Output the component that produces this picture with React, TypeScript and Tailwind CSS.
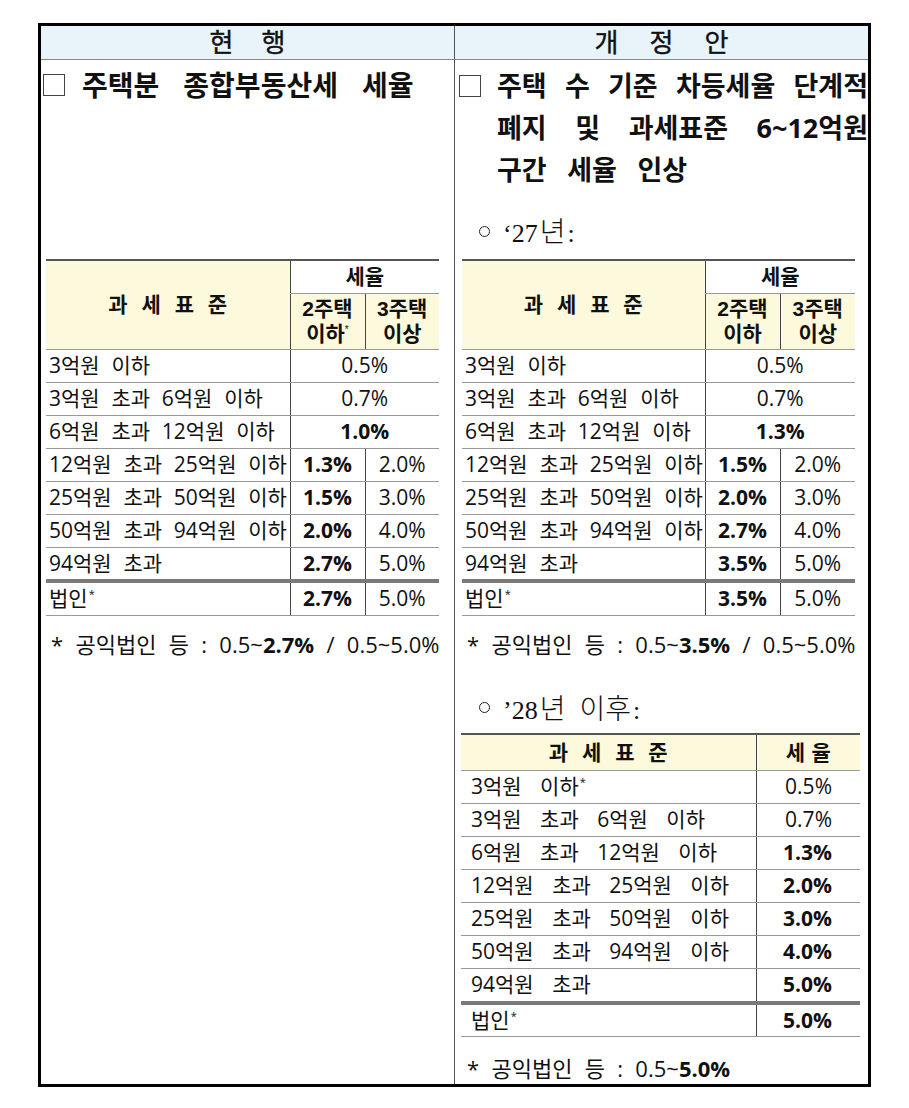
import React from "react";

type Row = { label: string; a: string; b?: string; boldA?: boolean; star?: boolean; dbl?: boolean };

const SANS = "font-['Open_Sans','Noto_Sans_CJK_KR',sans-serif]";

const Star = () => <span className="relative -top-[8px] text-[11px] ml-[1px]">*</span>;

const TwoLine = ({ a, b, star }: { a: string; b: string; star?: boolean }) => (
  <div className="flex flex-col items-center font-['Liberation_Sans','Noto_Sans_CJK_KR',sans-serif]">
    <span className="block h-[25px] leading-[25px]">{a}</span>
    <span className="block h-[25px] leading-[25px]">
      {b}
      {star && <span className="relative -top-[8px] text-[10px] font-normal">*</span>}
    </span>
  </div>
);

function RateTable({ rows, w1, w2, w3, star }: { rows: Row[]; w1: number; w2: number; w3: number; star?: boolean }) {
  return (
    <table className={`border-collapse table-fixed text-[#111] ${SANS}`} style={{ width: w1 + w2 + w3 }}>
      <colgroup>
        <col style={{ width: w1 }} />
        <col style={{ width: w2 }} />
        <col style={{ width: w3 }} />
      </colgroup>
      <thead>
        <tr className="h-[33px]">
          <th
            rowSpan={2}
            className="bg-[#fdf9dc] border-t-2 border-t-[#555] border-b border-b-[#999] text-[21px] font-bold [word-spacing:0.4em] text-center align-middle"
          >
            과 세 표 준
          </th>
          <th
            colSpan={2}
            className="bg-white border-t-2 border-t-[#555] border-b border-b-[#999] border-l border-l-[#444] text-[21px] font-bold text-center align-middle"
          >
            세율
          </th>
        </tr>
        <tr className="h-[56px]">
          <th className="bg-[#fdf9dc] border-b border-b-[#999] border-l border-l-[#444] text-[21px] font-bold text-center align-middle">
            <TwoLine a="2주택" b="이하" star={star} />
          </th>
          <th className="bg-[#fdf9dc] border-b border-b-[#999] border-l border-l-[#444] text-[21px] font-bold text-center align-middle">
            <TwoLine a="3주택" b="이상" />
          </th>
        </tr>
      </thead>
      <tbody>
        {rows.map((r, i) => (
          <tr key={i} className="h-[33px]">
            <td
              className={`pl-[3px] whitespace-nowrap text-[21px] [word-spacing:0.3em] align-middle ${
                r.dbl ? "border-b-[4px] border-b-[#7a7a7a]" : "border-b border-b-[#999]"
              }`}
            >
              {r.label}
              {r.star && <Star />}
            </td>
            {r.b === undefined ? (
              <td
                colSpan={2}
                className={`border-l border-l-[#444] text-center text-[21px] align-middle ${r.boldA ? "font-bold" : ""} ${
                  r.dbl ? "border-b-[4px] border-b-[#7a7a7a]" : "border-b border-b-[#999]"
                }`}
              >
                {r.a}
              </td>
            ) : (
              <>
                <td
                  className={`border-l border-l-[#444] text-center text-[21px] align-middle font-bold ${
                    r.dbl ? "border-b-[4px] border-b-[#7a7a7a]" : "border-b border-b-[#999]"
                  }`}
                >
                  {r.a}
                </td>
                <td
                  className={`border-l border-l-[#444] text-center text-[21px] align-middle ${
                    r.dbl ? "border-b-[4px] border-b-[#7a7a7a]" : "border-b border-b-[#999]"
                  }`}
                >
                  {r.b}
                </td>
              </>
            )}
          </tr>
        ))}
      </tbody>
    </table>
  );
}

const leftRows: Row[] = [
  { label: "3억원 이하", a: "0.5%" },
  { label: "3억원 초과 6억원 이하", a: "0.7%" },
  { label: "6억원 초과 12억원 이하", a: "1.0%", boldA: true },
  { label: "12억원 초과 25억원 이하", a: "1.3%", b: "2.0%" },
  { label: "25억원 초과 50억원 이하", a: "1.5%", b: "3.0%" },
  { label: "50억원 초과 94억원 이하", a: "2.0%", b: "4.0%" },
  { label: "94억원 초과", a: "2.7%", b: "5.0%", dbl: true },
  { label: "법인", a: "2.7%", b: "5.0%", star: true },
];

const rightRows: Row[] = [
  { label: "3억원 이하", a: "0.5%" },
  { label: "3억원 초과 6억원 이하", a: "0.7%" },
  { label: "6억원 초과 12억원 이하", a: "1.3%", boldA: true },
  { label: "12억원 초과 25억원 이하", a: "1.5%", b: "2.0%" },
  { label: "25억원 초과 50억원 이하", a: "2.0%", b: "3.0%" },
  { label: "50억원 초과 94억원 이하", a: "2.7%", b: "4.0%" },
  { label: "94억원 초과", a: "3.5%", b: "5.0%", dbl: true },
  { label: "법인", a: "3.5%", b: "5.0%", star: true },
];

const flatRows: { label: string; v: string; bold?: boolean; star?: boolean; dbl?: boolean }[] = [
  { label: "3억원 이하", v: "0.5%", star: true },
  { label: "3억원 초과 6억원 이하", v: "0.7%" },
  { label: "6억원 초과 12억원 이하", v: "1.3%", bold: true },
  { label: "12억원 초과 25억원 이하", v: "2.0%", bold: true },
  { label: "25억원 초과 50억원 이하", v: "3.0%", bold: true },
  { label: "50억원 초과 94억원 이하", v: "4.0%", bold: true },
  { label: "94억원 초과", v: "5.0%", bold: true, dbl: true },
  { label: "법인", v: "5.0%", bold: true, star: true },
];

function FlatTable() {
  return (
    <table className={`border-collapse table-fixed w-[399px] text-[#111] ${SANS}`}>
      <colgroup>
        <col className="w-[295px]" />
        <col className="w-[104px]" />
      </colgroup>
      <thead>
        <tr className="h-[37px]">
          <th className="bg-[#fdf9dc] border-t-2 border-t-[#555] border-b border-b-[#999] text-[21px] font-bold [word-spacing:0.4em] text-center align-middle">
            과 세 표 준
          </th>
          <th className="bg-[#fdf9dc] border-t-2 border-t-[#555] border-b border-b-[#999] border-l border-l-[#444] text-[21px] font-bold [word-spacing:0.05em] text-center align-middle">
            세 율
          </th>
        </tr>
      </thead>
      <tbody>
        {flatRows.map((r, i) => (
          <tr key={i} className="h-[33px]">
            <td
              className={`pl-[10px] whitespace-nowrap text-[21px] [word-spacing:0.62em] align-middle ${
                r.dbl ? "border-b-[4px] border-b-[#7a7a7a]" : "border-b border-b-[#999]"
              }`}
            >
              {r.label}
              {r.star && <Star />}
            </td>
            <td
              className={`border-l border-l-[#444] text-right pr-[28px] text-[21px] align-middle ${r.bold ? "font-bold" : ""} ${
                r.dbl ? "border-b-[4px] border-b-[#7a7a7a]" : "border-b border-b-[#999]"
              }`}
            >
              {r.v}
            </td>
          </tr>
        ))}
      </tbody>
    </table>
  );
}

const Box = () => <span className="inline-block w-[22px] h-[22px] border-[1.5px] border-[#444] shrink-0" />;

const Note = ({ children, mt }: { children: React.ReactNode; mt: string }) => (
  <div className={`${mt} ml-[8px] h-[30px] leading-[30px] text-[22px] [word-spacing:0.3em] whitespace-nowrap ${SANS}`}>
    {children}
  </div>
);

export default function App() {
  return (
    <div className="w-[909px] h-[1108px] bg-white pt-[23px] pl-[38px] text-[#111]">
      <div className="w-[833px] border-[3px] border-black">
        <div className="grid grid-cols-[414px_413px]">
          {/* headers */}
          <div className={`h-[34px] bg-[#e8f4fa] border-b border-b-[#888] border-r border-r-[#555] flex items-center justify-center gap-[28px] text-[26px] [-webkit-text-stroke:0.4px_#111] ${SANS}`}>
            <span>현</span>
            <span>행</span>
          </div>
          <div className={`h-[34px] bg-[#e8f4fa] border-b border-b-[#888] flex items-center justify-center gap-[31px] text-[26px] [-webkit-text-stroke:0.4px_#111] ${SANS}`}>
            <span>개</span>
            <span>정</span>
            <span>안</span>
          </div>

          {/* left body */}
          <div className="border-r border-r-[#555] pl-[2px] pt-[3px]">
            <div className={`flex items-center h-[44px] text-[28px] font-bold ${SANS}`}>
              <Box />
              <span className="ml-[17px] [word-spacing:0.6em]">주택분 종합부동산세 세율</span>
            </div>
            <div className="mt-[152px] ml-[3px]">
              <RateTable rows={leftRows} w1={244} w2={75} w3={74} star />
            </div>
            <Note mt="mt-[13px]">
              * 공익법인 등 : 0.5~<b>2.7%</b> / 0.5~5.0%
            </Note>
          </div>

          {/* right body */}
          <div className="pt-[5px] pl-[4px] pb-[1px]">
            <div className={`text-[27px] font-bold leading-[42px] ${SANS}`}>
              <div className="flex items-center">
                <Box />
                <div className="ml-[16px] flex-1 flex justify-between">
                  <span>주택</span>
                  <span>수</span>
                  <span>기준</span>
                  <span>차등세율</span>
                  <span>단계적</span>
                </div>
              </div>
              <div className="pl-[38px] flex justify-between">
                <span>폐지</span>
                <span>및</span>
                <span>과세표준</span>
                <span>6~12억원</span>
              </div>
              <div className="pl-[38px] [word-spacing:0.5em]">구간 세율 인상</div>
            </div>

            <div className="mt-[24px] h-[32px] flex items-center pl-[20px] text-[26px] font-['Liberation_Serif','Noto_Sans_CJK_KR',serif]">
              <span className="inline-block w-[11px] h-[11px] rounded-full border-[1.5px] border-[#222]" />
              <span className="ml-[13px]">
                ‘27<span className="inline-block text-[28px] px-[2px] font-['Noto_Sans_CJK_KR',sans-serif] font-light">년</span>:
              </span>
            </div>

            <div className="mt-[12px] ml-[3px]">
              <RateTable rows={rightRows} w1={243} w2={75} w3={75} />
            </div>
            <Note mt="mt-[13px]">
              * 공익법인 등 : 0.5~<b>3.5%</b> / 0.5~5.0%
            </Note>

            <div className="mt-[33px] h-[32px] flex items-center pl-[20px] text-[26px] font-['Liberation_Serif','Noto_Sans_CJK_KR',serif]">
              <span className="inline-block w-[11px] h-[11px] rounded-full border-[1.5px] border-[#222]" />
              <span className="ml-[13px]">
                ’28<span className="inline-block text-[28px] pl-[2px] pr-[14px] font-['Noto_Sans_CJK_KR',sans-serif] font-light">년</span>
                <span className="inline-block text-[28px] pr-[2px] font-['Noto_Sans_CJK_KR',sans-serif] font-light">이후</span>:
              </span>
            </div>

            <div className="mt-[9px] ml-[2px]">
              <FlatTable />
            </div>
            <Note mt="mt-[16px]">
              * 공익법인 등 : 0.5~<b>5.0%</b>
            </Note>
          </div>
        </div>
      </div>
    </div>
  );
}
